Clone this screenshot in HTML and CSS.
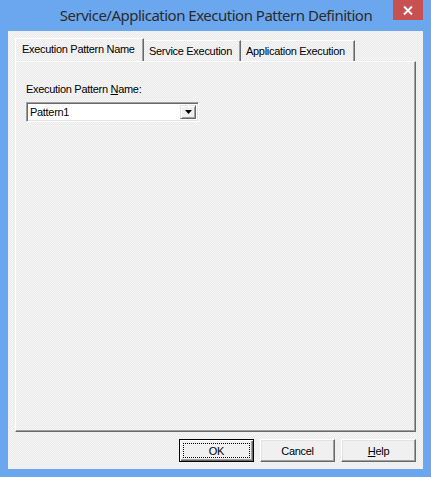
FILE: index.html
```html
<!DOCTYPE html>
<html lang="en">
<head>
    <meta charset="UTF-8">
    <title>Service/Application Execution Pattern Definition</title>
    <link rel="stylesheet" href="styles.css">
</head>
<body>
    <div class="window">
        <div class="titlebar">
            <span class="title">Service/Application Execution Pattern Definition</span>
            <button class="close-btn" aria-label="Close">
                <svg width="10" height="9" viewBox="0 0 10 9">
                    <path d="M1 0.5 L9 8.5 M9 0.5 L1 8.5" stroke="#fff" stroke-width="2"/>
                </svg>
            </button>
        </div>

        <div class="client">
            <div class="tabs">
                <div class="tab active tab-name">Execution Pattern Name</div>
                <div class="tab tab-service">Service Execution</div>
                <div class="tab tab-app">Application Execution</div>
            </div>

            <div class="tab-panel">
                <label class="field-label">Execution Pattern <u>N</u>ame:</label>
                <div class="combo">
                    <span class="combo-value">Pattern1</span>
                    <span class="combo-btn">
                        <svg width="7" height="4" viewBox="0 0 7 4"><path d="M0 0 H7 L3.5 4 Z" fill="#000"/></svg>
                    </span>
                </div>
            </div>

            <div class="buttons">
                <button class="button default"><span class="focus">OK</span></button>
                <button class="button">Cancel</button>
                <button class="button"><u>H</u>elp</button>
            </div>
        </div>
    </div>
</body>
</html>
```

FILE: styles.css
```css
body {
    margin: 0;
    background: #fff;
    font-family: 'Liberation Sans', Arial, sans-serif;
    font-size: 11px;
    letter-spacing: -0.3px;
    color: #000;
}

.window {
    width: 431px;
    height: 477px;
    box-sizing: border-box;
    background: #6ba7ef;
    padding: 0 8px 8px 8px;
    display: flex;
    flex-direction: column;
}

.titlebar {
    height: 31px;
    position: relative;
    display: flex;
    justify-content: center;
    margin: 0 -8px;
}

.title {
    font-family: 'Noto Sans', 'Open Sans', sans-serif;
    font-size: 15px;
    letter-spacing: -0.5px;
    color: #2b2b2b;
    line-height: 31px;
    padding-left: 1px;
}

.close-btn {
    position: absolute;
    top: 0;
    right: 8px;
    width: 30px;
    height: 20px;
    border: none;
    padding: 0;
    background: #c75050;
    display: flex;
    align-items: center;
    justify-content: center;
}

.client {
    flex: 1;
    display: flex;
    flex-direction: column;
    padding: 7px;
    background: repeating-conic-gradient(#f4f4f4 0 25%, #ececec 0 50%) 0 0 / 2px 2px;
}

.tabs {
    display: flex;
    align-items: flex-end;
    height: 23px;
}

.tab {
    height: 21px;
    box-sizing: border-box;
    padding: 4px 0 0 5px;
    border-top: 1px solid #fff;
    border-right: 1px solid #696969;
    box-shadow: inset -1px 0 0 #a0a0a0;
    white-space: nowrap;
}

.tab-name {
    width: 129px;
    padding-left: 6px;
    border-left: 1px solid #fff;
}

.tab-service {
    width: 97px;
}

.tab-app {
    width: 114px;
}

.tab.active {
    height: 23px;
    padding-top: 4px;
}

.tab-panel {
    height: 371px;
    width: 401px;
    box-sizing: border-box;
    border-top: 1px solid #fff;
    border-left: 1px solid #fff;
    border-right: 1px solid #696969;
    border-bottom: 1px solid #696969;
    box-shadow: inset -1px -1px 0 #a0a0a0;
    padding: 21px 10px 0 10px;
}

.field-label {
    display: block;
    margin-bottom: 7px;
}

.combo {
    width: 173px;
    height: 20px;
    box-sizing: border-box;
    display: flex;
    background: #fff;
    border-top: 1px solid #a0a0a0;
    border-left: 1px solid #a0a0a0;
    border-right: 1px solid #fff;
    border-bottom: 1px solid #fff;
    box-shadow: inset 1px 1px 0 #696969, inset -1px -1px 0 #e3e3e3;
    padding: 2px;
}

.combo-value {
    flex: 1;
    padding-left: 1px;
    line-height: 14px;
}

.combo-btn {
    width: 16px;
    box-sizing: border-box;
    background: #f0f0f0;
    border-top: 1px solid #e3e3e3;
    border-left: 1px solid #e3e3e3;
    border-right: 1px solid #696969;
    border-bottom: 1px solid #696969;
    box-shadow: inset 1px 1px 0 #fff, inset -1px -1px 0 #a0a0a0;
    display: flex;
    align-items: center;
    justify-content: center;
}

.buttons {
    display: flex;
    justify-content: flex-end;
    gap: 6px;
    margin-top: 7px;
}

.button {
    width: 75px;
    height: 23px;
    box-sizing: border-box;
    font-family: 'Liberation Sans', Arial, sans-serif;
    font-size: 11px;
    letter-spacing: -0.3px;
    color: #000;
    background: #f0f0f0;
    border-top: 1px solid #fff;
    border-left: 1px solid #fff;
    border-right: 1px solid #696969;
    border-bottom: 1px solid #696969;
    box-shadow: inset -1px -1px 0 #a0a0a0, inset 1px 1px 0 #e3e3e3;
    padding: 0;
}

.button.default {
    border: 1px solid #000;
    box-shadow: inset 1px 1px 0 #fff, inset -1px -1px 0 #696969, inset -2px -2px 0 #a0a0a0;
    padding: 3px;
}

.focus {
    display: flex;
    align-items: center;
    justify-content: center;
    height: 100%;
    border: 1px dotted #000;
    box-sizing: border-box;
}
```
